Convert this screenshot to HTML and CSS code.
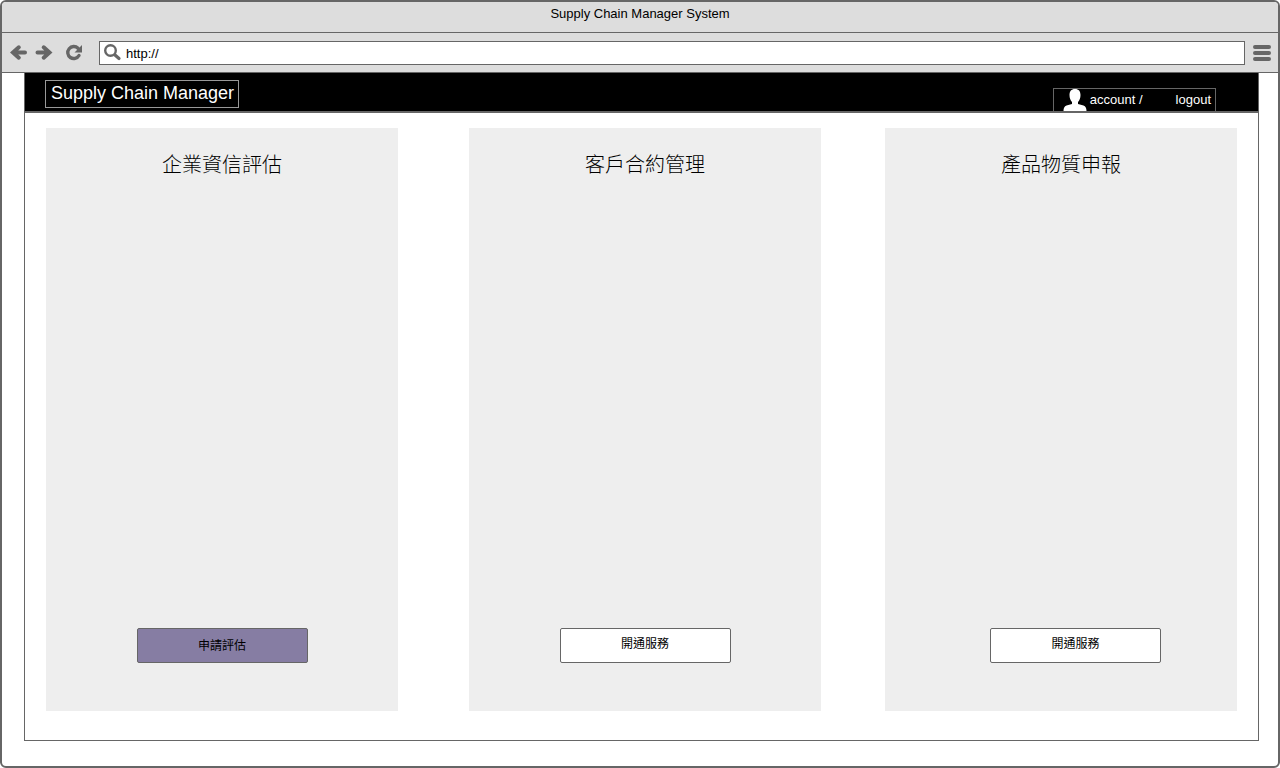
FILE: index.html
```html
<!DOCTYPE html>
<html lang="zh-Hant">
<head>
<meta charset="utf-8">
<title>Supply Chain Manager System</title>
<link rel="stylesheet" href="styles.css">
</head>
<body>
<div class="window">
  <div class="titlebar">Supply Chain Manager System</div>
  <div class="toolbar">
    <button class="tool" type="button" aria-label="Back">
      <svg width="18" height="18" viewBox="0 0 18 18"><path d="M9.800 3.300L4 8.500l5.800 5.200M4.500 8.500H16" fill="none" stroke="#666" stroke-width="4" stroke-linecap="round"/></svg>
    </button>
    <button class="tool tool-forward" type="button" aria-label="Forward">
      <svg width="18" height="18" viewBox="0 0 18 18"><path d="M8.700 3.300L14.500 8.500l-5.800 5.200M14 8.500H2.500" fill="none" stroke="#666" stroke-width="4" stroke-linecap="round"/></svg>
    </button>
    <button class="tool tool-reload" type="button" aria-label="Reload">
      <svg width="18" height="18" viewBox="0 0 18 18"><path d="M14 11.500A6 6 0 1 1 13 4.300" fill="none" stroke="#666" stroke-width="3.400" stroke-linecap="round"/><path d="M17 1V8.500H9.500z" fill="#666"/></svg>
    </button>
    <label class="address">
      <svg width="18" height="18" viewBox="0 0 18 18"><circle cx="6.500" cy="6.500" r="5.300" fill="none" stroke="#666" stroke-width="2.400"/><path d="M11 11L15 14.500" stroke="#666" stroke-width="3.200" stroke-linecap="round"/></svg>
      <input class="address-input" type="text" value="http://" aria-label="Address">
    </label>
    <button class="tool" type="button" aria-label="Menu">
      <svg width="18" height="18" viewBox="0 0 18 18"><path d="M2 3H16M2 9H16M2 15H16" stroke="#666" stroke-width="4" stroke-linecap="round"/></svg>
    </button>
  </div>
  <div class="app">
    <header class="header">
      <a class="brand" href="#">Supply Chain Manager</a>
      <nav class="user">
        <svg width="24" height="22" viewBox="0 0 24 22"><path d="M12 0C15.800 0 17.500 2.200 17.500 6C17.500 9 16.500 11.500 15 13V15L20.500 16.600C22.600 17.400 23.500 19 23.500 22H.5C.5 19 1.400 17.400 3.500 16.600L9 15V13C7.500 11.500 6.500 9 6.500 6C6.500 2.200 8.200 0 12 0z" fill="#fff"/></svg>
        <a class="account" href="#">account /</a>
        <a class="logout" href="#">logout</a>
      </nav>
    </header>
    <main class="cards">
      <section class="card">
        <h2 class="card-title">企業資信評估</h2>
        <button class="action action-primary" type="button">申請評估</button>
      </section>
      <section class="card card-middle">
        <h2 class="card-title">客戶合約管理</h2>
        <button class="action" type="button">開通服務</button>
      </section>
      <section class="card card-last">
        <h2 class="card-title">產品物質申報</h2>
        <button class="action" type="button">開通服務</button>
      </section>
    </main>
  </div>
</div>
</body>
</html>
```
FILE: styles.css
```css
* { box-sizing: border-box; }
body {
  margin: 0;
  background: #fff;
  color: #000;
  font: 13px/16px "Liberation Sans", Arial, "Noto Sans CJK TC", sans-serif;
}
button, input { font: inherit; color: inherit; }
a { color: inherit; text-decoration: none; }
svg { display: block; flex: none; }

.window {
  min-height: 100vh;
  display: flex;
  flex-direction: column;
  border: 2px solid #666;
  border-radius: 6px;
}
.titlebar {
  height: 31px;
  padding-top: 4px;
  text-align: center;
  background: #ddd;
  border-bottom: 1px solid #666;
  border-radius: 4px 4px 0 0;
}
.toolbar {
  display: flex;
  align-items: center;
  height: 40px;
  padding: 0 7px;
  background: #ddd;
  border-bottom: 1px solid #666;
}
.tool { padding: 0; border: 0; background: none; }
.tool-forward { margin-left: 8px; }
.tool-reload { margin-left: 12px; }
.address {
  flex: 1;
  display: flex;
  align-items: center;
  gap: 4px;
  height: 24px;
  margin: 0 8px 0 16px;
  padding: 0 4px;
  background: #fff;
  border: 1px solid #666;
}
.address-input {
  flex: 1;
  min-width: 0;
  padding: 2px 0 0;
  border: 0;
  outline: 0;
  background: none;
}

.app {
  flex: 1;
  display: flex;
  flex-direction: column;
  margin: 0 19px 25px 22px;
  border: 1px solid #666;
  border-top: 0;
}
.header {
  display: flex;
  justify-content: space-between;
  height: 40px;
  padding: 0 42px 0 20px;
  background: #000;
  border-bottom: 2px solid #666;
  color: #fff;
}
.brand {
  height: 28px;
  margin-top: 7px;
  padding: 0 4px 0 5px;
  border: 1px solid #999;
  font-size: 18px;
  line-height: 24px;
}
.user {
  display: flex;
  align-self: flex-end;
  align-items: center;
  height: 23px;
  padding: 0 4px 0 9px;
  border: 1px solid #666;
  border-bottom: 0;
}
.account { margin: 0 33px 0 3px; }

.cards {
  flex: 1;
  display: grid;
  grid-template-columns: 352fr 71fr 352fr 64fr 352fr;
  padding: 15px 21px 29px;
}
.card {
  display: flex;
  flex-direction: column;
  align-items: center;
  justify-content: space-between;
  padding: 25px 0 48px;
  background: #eee;
}
.card-middle { grid-column: 3; }
.card-last { grid-column: 5; }
.card-title {
  margin: 0;
  font-size: 20px;
  font-weight: 300;
  line-height: 24px;
}
.action {
  width: 171px;
  height: 35px;
  padding: 0 0 4px;
  border: 1px solid #666;
  border-radius: 2px;
  background: #fff;
  font-size: 12px;
}
.action-primary { padding: 0; background: #867da3; }
.card-last .action { margin-left: 29px; }
```
